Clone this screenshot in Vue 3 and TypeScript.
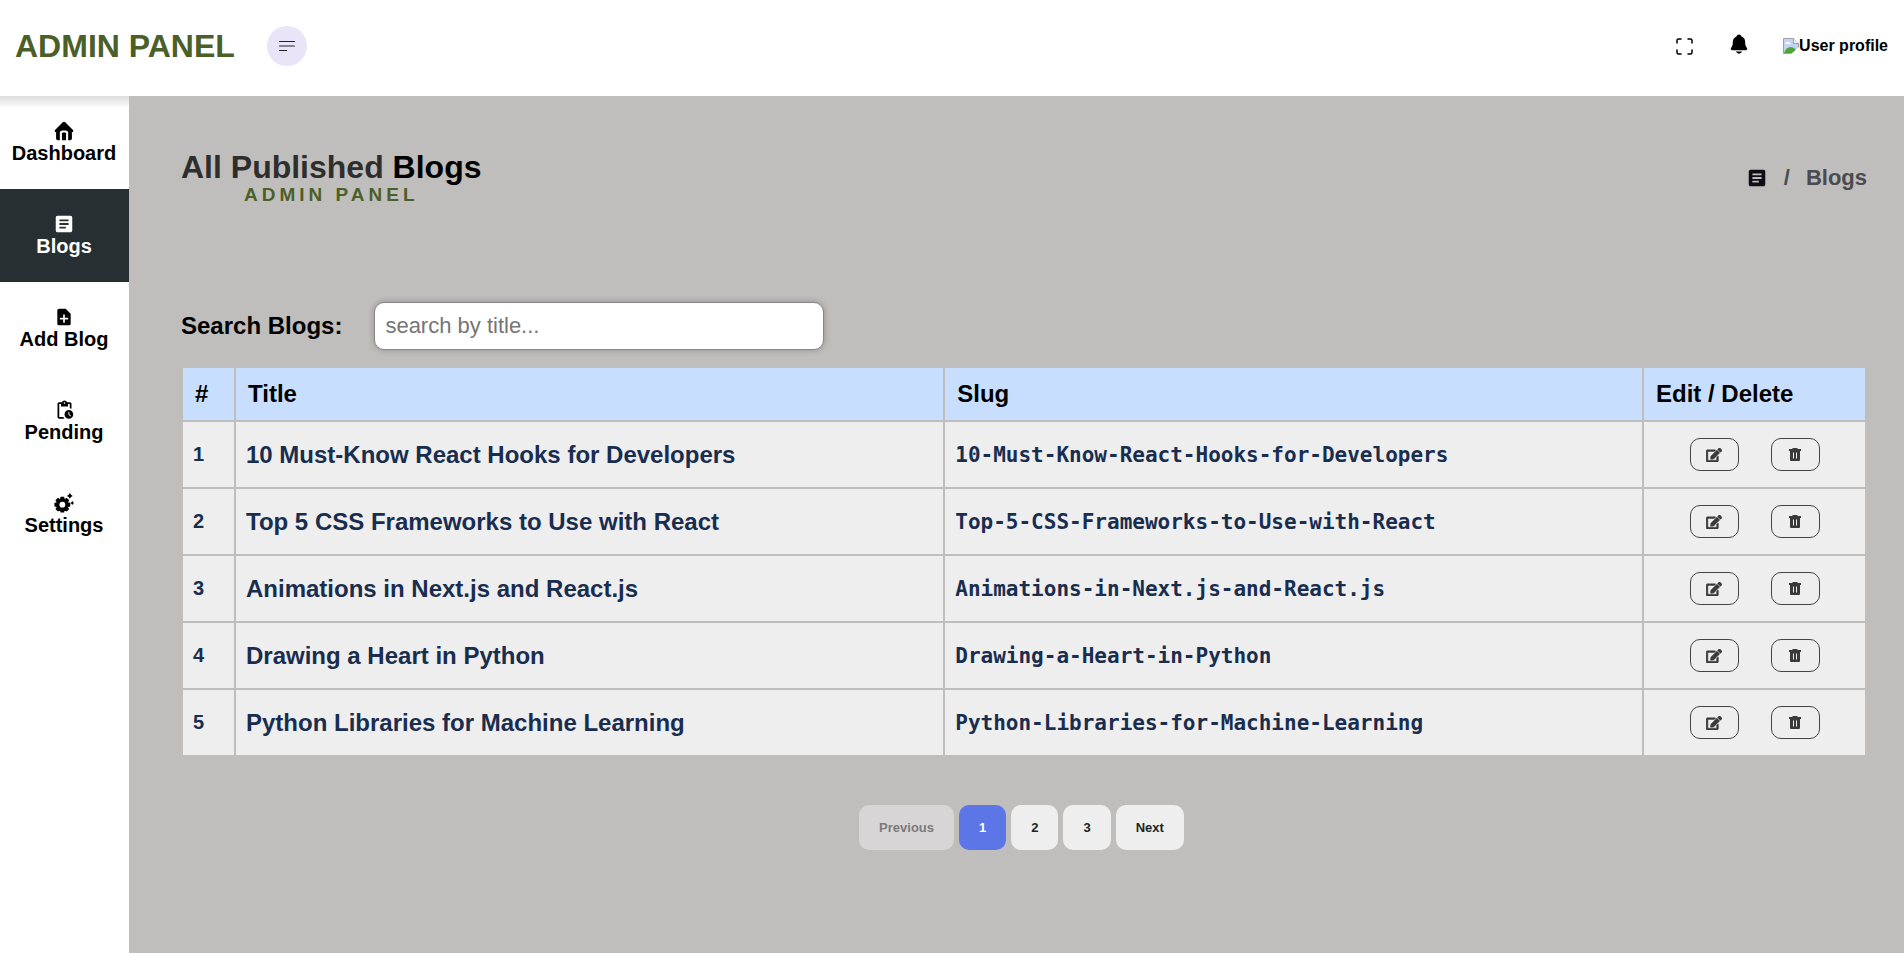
<script setup lang="ts">
import { ref } from 'vue'

interface NavItem {
  label: string
  icon: string
  active?: boolean
}

interface Blog {
  title: string
  slug: string
}

const navItems: NavItem[] = [
  { label: 'Dashboard', icon: 'home' },
  { label: 'Blogs', icon: 'article', active: true },
  { label: 'Add Blog', icon: 'add' },
  { label: 'Pending', icon: 'pending' },
  { label: 'Settings', icon: 'settings' },
]

const blogs: Blog[] = [
  { title: '10 Must-Know React Hooks for Developers', slug: '10-Must-Know-React-Hooks-for-Developers' },
  { title: 'Top 5 CSS Frameworks to Use with React', slug: 'Top-5-CSS-Frameworks-to-Use-with-React' },
  { title: 'Animations in Next.js and React.js', slug: 'Animations-in-Next.js-and-React.js' },
  { title: 'Drawing a Heart in Python', slug: 'Drawing-a-Heart-in-Python' },
  { title: 'Python Libraries for Machine Learning', slug: 'Python-Libraries-for-Machine-Learning' },
]

const search = ref('')
const currentPage = ref(1)
const pages = [1, 2, 3]
</script>

<template>
  <div class="app">
    <header class="topbar">
      <div class="brand">
        <h1 class="logo">ADMIN PANEL</h1>
        <button class="menu" type="button" aria-label="Toggle menu">
          <svg width="16" height="16" viewBox="0 0 16 16" fill="none" stroke="currentColor" stroke-width="1.200" stroke-linecap="round">
            <path d="M.6 3.500h14.800M.6 8h14.800M.6 12.500h7" />
          </svg>
        </button>
      </div>
      <div class="tools">
        <button class="tool" type="button" aria-label="Full screen">
          <svg width="17" height="17" viewBox="0 0 17 17" fill="none" stroke="currentColor" stroke-width="1.500" stroke-linecap="round">
            <path d="M1 5V2.500Q1 1 2.500 1H5M12 1h2.500Q16 1 16 2.500V5M16 12v2.500q0 1.500-1.500 1.500H12M5 16H2.500Q1 16 1 14.500V12" />
          </svg>
        </button>
        <button class="tool bell" type="button" aria-label="Notifications">
          <svg width="22" height="22" viewBox="0 0 512 512" fill="currentColor">
            <path d="M440.080 341.310c-1.660-2-3.290-4-4.890-5.930-22-26.610-35.310-42.670-35.310-118 0-39-9.330-71-27.720-95-13.560-17.730-31.890-31.180-56.050-41.120a3 3 0 0 1-.82-.67C306.600 51.490 282.820 32 256 32s-50.590 19.490-59.280 48.560a3.130 3.130 0 0 1-.81.65c-56.380 23.210-83.780 67.740-83.780 136.140 0 75.360-13.290 91.420-35.310 118-1.600 1.930-3.230 3.890-4.890 5.930a35.160 35.160 0 0 0-4.650 37.620c6.170 13 19.320 21.070 34.330 21.070H410.500c14.940 0 28-8.060 34.190-21a35.170 35.170 0 0 0-4.610-37.660zM256 480a80.060 80.060 0 0 0 70.440-42.130 4 4 0 0 0-3.540-5.870H189.120a4 4 0 0 0-3.550 5.870A80.060 80.060 0 0 0 256 480z" />
          </svg>
        </button>
        <div class="profile">
          <svg width="16" height="16" viewBox="0 0 16 16" aria-hidden="true">
            <path d="M.5.5h10l5 5v10H.5z" fill="#c3d5f7" stroke="#a0a0a0" />
            <path d="M2 6q1-2 3-2q2 0 3 2z" fill="#fff" />
            <path d="M1 15q2-6 7-6q3 0 5 3l-3 3z" fill="#50a335" />
            <path d="M8 16 16 9v7z" fill="#fff" />
            <path d="M10.500.5v5h5" fill="#fff" stroke="#a0a0a0" />
          </svg>
          <span>User profile</span>
        </div>
      </div>
    </header>

    <div class="body">
      <nav class="sidebar">
        <a v-for="item in navItems" :key="item.label" href="#" class="nav-item" :class="{ active: item.active }">
          <svg v-if="item.icon === 'home'" width="20" height="20" viewBox="0 0 24 24" fill="currentColor">
            <path fill-rule="evenodd" d="M12 1q.8 0 1.500.6L22.500 10.500q1 1 .5 2-.3.7-1.500.7V21q0 2-2 2H17v-8.500q0-3-3-3h-4q-3 0-3 3V23H4.500q-2 0-2-2v-7.800q-1.200 0-1.500-.7-.5-1 .5-2L10.500 1.600Q11.200 1 12 1zM9.500 23v-8q0-1.200 1.200-1.200h2.600q1.200 0 1.200 1.200v8z" />
          </svg>
          <svg v-else-if="item.icon === 'article'" width="22" height="22" viewBox="0 0 24 24" fill="currentColor">
            <path d="M19 3H5c-1.100 0-2 .9-2 2v14c0 1.100.9 2 2 2h14c1.100 0 2-.9 2-2V5c0-1.100-.9-2-2-2zm-5 14H7v-2h7v2zm3-4H7v-2h10v2zm0-4H7V7h10v2z" />
          </svg>
          <svg v-else-if="item.icon === 'add'" width="20" height="20" viewBox="0 0 24 24" fill="currentColor">
            <path d="M14 2H6c-1.100 0-2 .9-2 2v16c0 1.100.9 2 2 2h12c1.100 0 2-.9 2-2V8zm3 13h-4v4h-2v-4H7v-2h4V9h2v4h4z" />
          </svg>
          <svg v-else-if="item.icon === 'pending'" width="21" height="21" viewBox="0 0 24 24" fill="currentColor">
            <path d="M17 12c-2.760 0-5 2.240-5 5s2.240 5 5 5 5-2.240 5-5-2.240-5-5-5zm1.650 7.350L16.500 17.200V14h1v2.790l1.850 1.850-.7.710zM18 3h-3.180C14.400 1.840 13.300 1 12 1s-2.400.84-2.820 2H6c-1.100 0-2 .9-2 2v15c0 1.100.9 2 2 2h6.110a6.743 6.743 0 0 1-1.420-2H6V5h2v3h8V5h2v5.080c.71.100 1.380.31 2 .6V5c0-1.100-.9-2-2-2zm-6 2c-.55 0-1-.45-1-1s.45-1 1-1 1 .45 1 1-.45 1-1 1z" />
          </svg>
          <svg v-else width="20" height="20" viewBox="0 0 24 24" fill="currentColor">
            <circle cx="10" cy="14" r="5.500" fill="none" stroke="currentColor" stroke-width="4" />
            <path d="M7.800 4.500h4.400l.8 4H7zM7.800 23.500h4.400l.8-4H7zM.5 11.800v4.400l4 .8v-6zM19.500 11.800v4.400l-4 .8v-6zM1.700 8.800l3.100-3.100 3.400 2.300-4.200 4.200zM18.300 8.800l-3.100-3.100-3.400 2.300 4.200 4.200zM1.700 19.200l3.100 3.100L8.200 20 4 15.800zM18.300 19.200l-3.100 3.100-3.400-2.300 4.200-4.200z" />
            <path d="m19 0 1.400 2.100 2.100 1.400-2.100 1.400L19 7l-1.400-2.100-2.100-1.400 2.100-1.400zM22 9.500l1 1.500 1 1-1 1-1 1.500-1-1.500-1.500-1 1.500-1z" />
          </svg>
          <span>{{ item.label }}</span>
        </a>
      </nav>

      <main class="content">
        <div class="heading">
          <div class="titles">
            <h2>All Published <span>Blogs</span></h2>
            <h3>ADMIN PANEL</h3>
          </div>
          <div class="crumbs">
            <svg width="22" height="22" viewBox="0 0 24 24" fill="currentColor" aria-hidden="true">
              <path d="M19 3H5c-1.100 0-2 .9-2 2v14c0 1.100.9 2 2 2h14c1.100 0 2-.9 2-2V5c0-1.100-.9-2-2-2zm-5 14H7v-2h7v2zm3-4H7v-2h10v2zm0-4H7V7h10v2z" />
            </svg>
            <span>/</span>
            <span>Blogs</span>
          </div>
        </div>

        <div class="search">
          <label for="blog-search">Search Blogs:</label>
          <input id="blog-search" v-model="search" type="text" placeholder="search by title..." />
        </div>

        <table class="blogs">
          <colgroup>
            <col class="col-index" />
            <col class="col-title" />
            <col />
            <col class="col-actions" />
          </colgroup>
          <thead>
            <tr>
              <th>#</th>
              <th>Title</th>
              <th>Slug</th>
              <th>Edit / Delete</th>
            </tr>
          </thead>
          <tbody>
            <tr v-for="(blog, i) in blogs" :key="blog.slug">
              <td class="index">{{ i + 1 }}</td>
              <td class="title">{{ blog.title }}</td>
              <td class="slug">{{ blog.slug }}</td>
              <td>
                <div class="actions">
                  <button type="button" aria-label="Edit">
                    <svg width="16" height="14" viewBox="0 0 576 512" fill="currentColor" stroke="currentColor" stroke-width="16">
                      <path d="M402.600 83.200l90.200 90.200c3.800 3.800 3.800 10 0 13.800L274.400 405.600l-92.800 10.300c-12.400 1.400-22.900-9.100-21.500-21.500l10.300-92.800L388.800 83.200c3.800-3.800 10-3.800 13.800 0zm162-22.900l-48.800-48.800c-15.200-15.200-39.900-15.200-55.200 0l-35.400 35.400c-3.800 3.800-3.800 10 0 13.800l90.200 90.200c3.800 3.800 10 3.800 13.800 0l35.400-35.400c15.200-15.300 15.200-40 0-55.200zM384 346.200V448H64V128h229.800c3.200 0 6.200-1.300 8.500-3.500l40-40c7.600-7.600 2.200-20.500-8.500-20.500H48C21.500 64 0 85.500 0 112v352c0 26.500 21.500 48 48 48h352c26.500 0 48-21.500 48-48V306.200c0-10.700-12.900-16-20.500-8.500l-40 40c-2.200 2.300-3.500 5.300-3.500 8.500z" />
                    </svg>
                  </button>
                  <button type="button" aria-label="Delete">
                    <svg width="12" height="14" viewBox="0 0 12 14" fill="currentColor">
                      <path fill-rule="evenodd" d="M4 0h4l1 1h3v2h-1v9q0 1-1 1H2q-1 0-1-1V3H0V1h3zM4 4.500v6h1v-6zM7 4.500v6h1v-6z" />
                    </svg>
                  </button>
                </div>
              </td>
            </tr>
          </tbody>
        </table>

        <div class="pagination">
          <button type="button" :disabled="currentPage === 1" @click="currentPage--">Previous</button>
          <button
            v-for="page in pages"
            :key="page"
            type="button"
            :class="{ current: page === currentPage }"
            @click="currentPage = page"
          >
            {{ page }}
          </button>
          <button type="button" :disabled="currentPage === pages.length" @click="currentPage++">Next</button>
        </div>
      </main>
    </div>
  </div>
</template>

<style>
body {
  margin: 0;
}
</style>

<style scoped>
.app {
  display: flex;
  flex-direction: column;
  min-height: 100vh;
  font-family: "Liberation Sans", Arial, Helvetica, sans-serif;
  font-weight: 700;
  color: #000;
}

button {
  font-family: inherit;
  font-weight: inherit;
  cursor: pointer;
}

svg {
  display: block;
}

.topbar {
  display: flex;
  align-items: center;
  justify-content: space-between;
  box-sizing: border-box;
  height: 96px;
  padding: 0 16px 4px 15px;
  background: #fff;
}

.brand {
  display: flex;
  align-items: center;
  gap: 32px;
}

.logo {
  margin: 0;
  font-size: 32px;
  line-height: 36px;
  color: #4b6029;
}

.menu {
  display: grid;
  place-items: center;
  width: 40px;
  height: 40px;
  padding: 0;
  border: 0;
  border-radius: 50%;
  background: #e9e4f8;
  color: #222;
}

.tools {
  display: flex;
  align-items: center;
}

.tool {
  padding: 0;
  border: 0;
  background: none;
  color: #000;
}

.bell {
  margin: 0 33px 4px 35px;
}

.profile {
  display: flex;
  align-items: center;
  font-size: 16px;
  line-height: 20px;
}

.body {
  display: flex;
  flex: 1;
}

.sidebar {
  width: 129px;
  flex: none;
  background: linear-gradient(#dcdcdc, #fff 12px);
}

.nav-item {
  display: flex;
  flex-direction: column;
  align-items: center;
  box-sizing: border-box;
  height: 93px;
  padding: 24px 1px 0 0;
  font-size: 20px;
  line-height: 22px;
  color: #000;
  text-decoration: none;
}

.nav-item svg {
  height: 22px;
}

.nav-item.active {
  background: #282f32;
  color: #fff;
}

.content {
  flex: 1;
  min-width: 0;
  padding: 53px 37px 40px 52px;
  background: #bfbebc;
}

.heading {
  display: flex;
  align-items: flex-start;
  justify-content: space-between;
}

.titles {
  text-align: center;
}

h2,
h3 {
  margin: 0;
}

h2 {
  font-size: 32px;
  line-height: 36px;
  color: #2e2e2e;
}

h2 span {
  color: #000;
}

h3 {
  font-size: 19px;
  line-height: 20px;
  letter-spacing: 4px;
  color: #4b6029;
}

.crumbs {
  display: flex;
  align-items: center;
  gap: 16px;
  margin-top: 16px;
  font-size: 22px;
  line-height: 26px;
  color: #4a4a50;
}

.crumbs svg {
  color: #110d17;
}

.search {
  display: flex;
  align-items: center;
  gap: 32px;
  margin-top: 97px;
  margin-bottom: 16px;
  font-size: 24px;
}

.search input {
  box-sizing: border-box;
  width: 450px;
  height: 48px;
  padding: 0 10px;
  border: 1px solid #86868b;
  border-radius: 10px;
  background: #fff;
  box-shadow: 0 0 6px rgba(0, 0, 0, 0.25);
  font-family: inherit;
  font-size: 22px;
}

.search input::placeholder {
  color: #757575;
}

.blogs {
  width: 100%;
  table-layout: fixed;
  border-collapse: separate;
  border-spacing: 2px;
}

.col-index {
  width: 51px;
}

.col-title {
  width: 42.2%;
}

.col-actions {
  width: 221px;
}

th {
  height: 52px;
  padding: 0 12px;
  background: #c8deff;
  font-size: 24px;
  text-align: left;
}

td {
  height: 65px;
  padding: 0 10px;
  background: #eee;
  color: #192d4e;
}

.index {
  font-size: 20px;
}

.title {
  font-size: 24px;
}

.slug {
  font-family: "DejaVu Sans Mono", Menlo, monospace;
  font-size: 21px;
}

.actions {
  display: flex;
  justify-content: center;
  gap: 32px;
}

.actions button {
  display: grid;
  place-items: center;
  width: 49px;
  height: 33px;
  padding: 0;
  border: 1px solid #444;
  border-radius: 10px;
  background: none;
  color: #3a3a3a;
}

.pagination {
  display: flex;
  justify-content: center;
  margin-top: 48px;
}

.pagination button {
  height: 45px;
  margin-right: 5px;
  padding: 0 20px;
  border: 0;
  border-radius: 10px;
  background: #eee;
  color: #222;
  font-size: 13px;
}

.pagination button.current {
  background: #5c76e7;
  color: #fff;
}

.pagination button:disabled {
  background: #d7d5d6;
  color: #7c7a7b;
  cursor: default;
}
</style>
